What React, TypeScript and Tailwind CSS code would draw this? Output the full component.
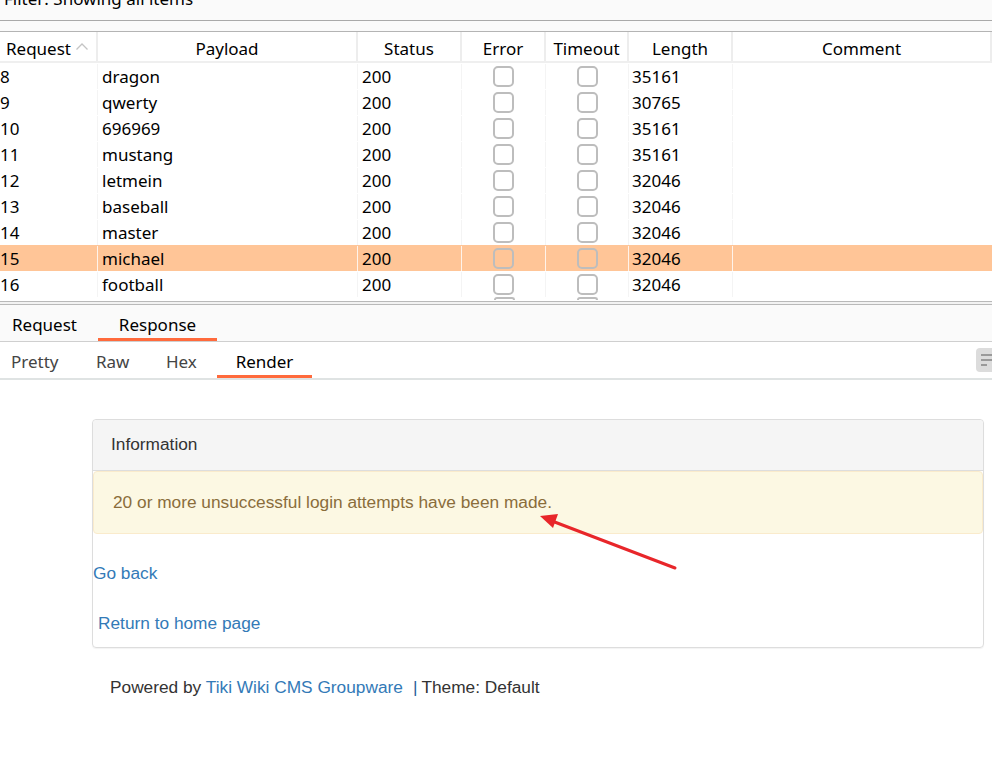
import React from "react";

const cols = ["w-[98px]", "w-[260px]", "w-[104px]", "w-[84px]", "w-[83px]", "w-[104px]", "flex-1"];

const rows = [
  ["8", "dragon", "35161"],
  ["9", "qwerty", "30765"],
  ["10", "696969", "35161"],
  ["11", "mustang", "35161"],
  ["12", "letmein", "32046"],
  ["13", "baseball", "32046"],
  ["14", "master", "32046"],
  ["15", "michael", "32046"],
  ["16", "football", "32046"],
];

const Check = () => <div className="w-[21px] h-[21px] rounded-[5px] border-2 border-[#bdbdbd]" />;

const ResultsTable = () => {
  const headers = ["Request", "Payload", "Status", "Error", "Timeout", "Length", "Comment"];
  return (
    <div className="bg-white">
      <div className="flex h-[31px] border-b-2 border-[#efefef]">
        {headers.map((h, i) => (
          <div
            key={h}
            className={`${cols[i]} flex items-center pt-[5px] border-r-2 border-[#ededed] ${i === 0 ? "pl-[6px]" : "justify-center"}`}
          >
            {h}
            {i === 0 && (
              <svg width="14" height="10" viewBox="0 0 14 10" className="ml-[4px] mb-[4px]">
                <path d="M1.5 7.5 L7 2 L12.5 7.5" fill="none" stroke="#c4c4c4" strokeWidth="1.3" />
              </svg>
            )}
          </div>
        ))}
      </div>
      {rows.map(([n, p, len]) => {
        const hl = n === "15";
        const line = hl ? "border-[#fff3ea]" : "border-[#f4f4f4]";
        return (
          <div key={n} className={`flex h-[26px] pt-[1px] ${hl ? "bg-[#ffc597]" : ""}`}>
            <div className={`${cols[0]} flex items-center border-r ${line}`}>{n}</div>
            <div className={`${cols[1]} flex items-center pl-[4px] border-r ${line}`}>{p}</div>
            <div className={`${cols[2]} flex items-center pl-[4px] border-r ${line}`}>200</div>
            <div className={`${cols[3]} flex items-center justify-center border-r ${line}`}><Check /></div>
            <div className={`${cols[4]} flex items-center justify-center border-r ${line}`}><Check /></div>
            <div className={`${cols[5]} flex items-center pl-[3px] border-r ${line}`}>{len}</div>
            <div className="flex-1" />
          </div>
        );
      })}
      <div className="flex h-[4px] overflow-hidden">
        <div className="w-[98px]" />
        <div className="w-[260px]" />
        <div className="w-[104px]" />
        <div className="w-[84px] flex justify-center"><div className="w-[21px] h-[3px] rounded-t-[4px] border-2 border-b-0 border-[#bdbdbd]" /></div>
        <div className="w-[83px] flex justify-center"><div className="w-[21px] h-[3px] rounded-t-[4px] border-2 border-b-0 border-[#bdbdbd]" /></div>
      </div>
    </div>
  );
};

const Tabs = () => (
  <>
    <div className="h-[4px] border-t border-b border-[#b9b9b9] bg-[#f2f2f2]" />
    <div className="flex h-[37px] bg-[#fafafa] border-b border-[#cfcfcf] items-stretch">
      <div className="w-[98px] flex items-center pl-[12px] pt-[4px]">Request</div>
      <div className="w-[119px] flex items-center justify-center border-b-[3px] border-[#ff6a3c] pt-[6px]">Response</div>
    </div>
    <div className="flex h-[38px] bg-white border-b-2 border-[#dfe3e3] items-stretch">
      <div className="w-[85px] flex items-center pl-[11px] pt-[4px] text-[#444]">Pretty</div>
      <div className="w-[70px] flex items-center pl-[11px] pt-[4px] text-[#444]">Raw</div>
      <div className="w-[62px] flex items-center pl-[11px] pt-[4px] text-[#444]">Hex</div>
      <div className="w-[95px] flex items-center justify-center border-b-[3px] border-[#ff6a3c] pt-[7px]">Render</div>
      <div className="flex-1 flex justify-end items-start pt-[6px]">
        <div className="w-[16px] h-[24px] bg-[#dcdcdc] rounded-l-[4px] flex flex-col gap-[3px] pl-[5px] pt-[6px]">
          <div className="h-[2px] w-[11px] bg-[#9a9a9a]" />
          <div className="h-[2px] w-[11px] bg-[#9a9a9a]" />
          <div className="h-[2px] w-[6px] bg-[#9a9a9a]" />
        </div>
      </div>
    </div>
  </>
);

const Rendered = () => (
  <div className="relative bg-white pt-[39px] pb-[60px] font-['Liberation_Sans',Arial,sans-serif] text-[17.3px] text-[#333]">
    <div className="ml-[92px] mr-[8px] border border-[#dddddd] rounded-[4px] shadow-[0_1px_1px_rgba(0,0,0,0.05)]">
      <div className="h-[51px] bg-[#f5f5f5] border-b border-[#dddddd] rounded-t-[4px] flex items-center pl-[18px]">
        Information
      </div>
      <div className="h-[63px] bg-[#fcf8e3] border border-[#faebcc] rounded-[4px] flex items-center pl-[19px] text-[#8a6d3b]">
        20 or more unsuccessful login attempts have been made.
      </div>
      <div className="pt-[29px] text-[#337ab7] leading-[20px]">Go back</div>
      <div className="pt-[30px] pb-[14px] pl-[5px] text-[#337ab7] leading-[20px]">Return to home page</div>
    </div>
    <div className="pl-[110px] pt-[29px] leading-[20px]">
      Powered by <span className="text-[#337ab7]">Tiki Wiki CMS Groupware</span>
      <span className="text-[#2a5d9a] ml-[10px] mr-[4px]">|</span>Theme: Default
    </div>
    <svg className="absolute left-[530px] top-[125px]" width="160" height="70" viewBox="0 0 160 70">
      <line x1="145" y1="63" x2="22" y2="16" stroke="#e8262a" strokeWidth="3" strokeLinecap="round" />
      <path d="M10 11 L28 9 L23 23 Z" fill="#e8262a" />
    </svg>
  </div>
);

export default function App() {
  return (
    <div className="w-[992px] h-[768px] overflow-hidden bg-white font-['Noto_Sans','Segoe_UI',sans-serif] text-[17px] text-black">
      <div className="h-[21px] overflow-hidden bg-[#fafafa] border-b border-[#a9a9a9] pl-[4px]">
        <div className="-mt-[13px] leading-[24px]">Filter: Showing all items</div>
      </div>
      <div className="h-[11px] bg-[#fafafa] border-b border-[#b4b4b4]" />
      <ResultsTable />
      <Tabs />
      <Rendered />
    </div>
  );
}
